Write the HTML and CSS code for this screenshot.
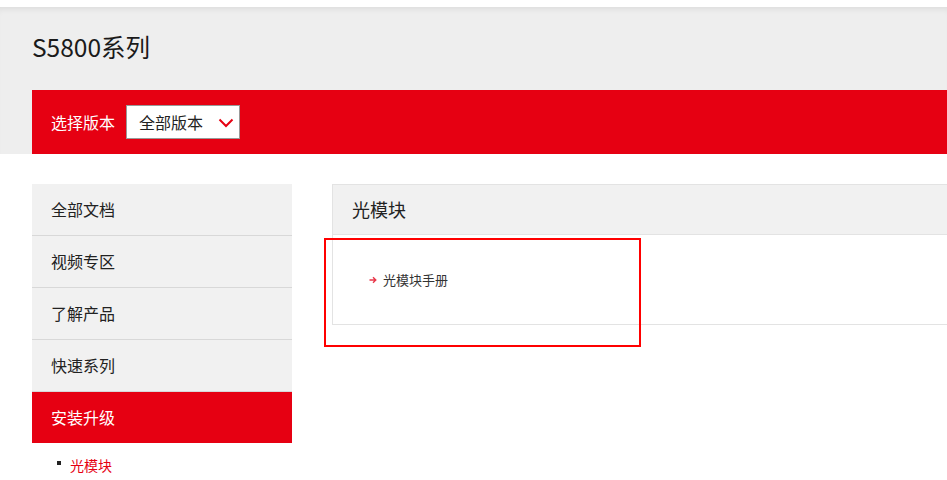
FILE: index.html
```html
<!DOCTYPE html>
<html lang="zh-CN">
<head>
<meta charset="utf-8">
<title>S5800系列</title>
<link rel="stylesheet" href="styles.css">
</head>
<body>
<div class="top-gap"></div>
<header class="hero">
  <h1 class="title">S5800系列</h1>
  <div class="version-bar">
    <span class="version-label">选择版本</span>
    <div class="select">
      <span class="select-text">全部版本</span>
      <svg class="chev" width="16" height="10" viewBox="0 0 16 10"><path d="M1.5 1.5 L8 8 L14.5 1.5" fill="none" stroke="#e60012" stroke-width="2"/></svg>
    </div>
  </div>
</header>
<main class="content">
  <aside class="sidebar">
    <ul class="nav">
      <li class="nav-item">全部文档</li>
      <li class="nav-item">视频专区</li>
      <li class="nav-item">了解产品</li>
      <li class="nav-item">快速系列</li>
      <li class="nav-item active">安装升级</li>
    </ul>
    <ul class="subnav">
      <li class="sub-item"><span class="dot"></span>光模块</li>
    </ul>
  </aside>
  <section class="panel">
    <div class="panel-head">光模块</div>
    <div class="panel-body">
      <a class="doc-link"><svg class="arrow" width="8" height="8" viewBox="0 0 8 8"><path d="M0.5 4 H6.5 M4 1.2 L6.8 4 L4 6.8" fill="none" stroke="#e8374a" stroke-width="1.4"/></svg>光模块手册</a>
    </div>
    <div class="highlight"></div>
  </section>
</main>
</body>
</html>
```
FILE: styles.css
```css
* { box-sizing: border-box; }
html, body { margin: 0; padding: 0; }
body {
  font-family: "Noto Sans CJK SC", "Noto Sans", sans-serif;
  background: #fff;
  color: #222;
  width: 947px;
  overflow: hidden;
}
.top-gap { height: 7px; background: #fff; }
.hero {
  background: #eeeeee;
  box-shadow: inset 0 6px 6px -4px rgba(0,0,0,0.08);
  padding: 24px 0 0 32px;
  height: 147px;
}
.title {
  margin: 0;
  font-size: 24.5px;
  font-weight: 400;
  line-height: 32px;
  color: #1a1a1a;
  height: 59px;
}
.version-bar {
  background: #e60012;
  height: 64px;
  display: flex;
  align-items: center;
  padding-left: 19px;
}
.version-label {
  color: #fff;
  font-size: 16px;
  line-height: 20px;
  margin-right: 11px;
}
.select {
  width: 114px;
  height: 34px;
  background: #fff;
  border: 1px solid #999;
  display: flex;
  align-items: center;
  justify-content: space-between;
  padding: 0 5px 0 12px;
}
.select-text { font-size: 16px; color: #222; line-height: 20px; }
.chev { display: block; margin-top: 1px; }
.content {
  display: flex;
  padding: 30px 0 0 32px;
  gap: 40px;
}
.sidebar { width: 260px; flex: none; }
.nav { list-style: none; margin: 0; padding: 0; }
.nav-item {
  height: 52px;
  background: #f1f1f1;
  border-bottom: 1px solid #d8d8d8;
  font-size: 16px;
  line-height: 51px;
  padding-left: 19px;
  color: #222;
}
.nav-item.active {
  background: #e60012;
  color: #fff;
  border-bottom: none;
  height: 51px;
}
.subnav { list-style: none; margin: 0; padding: 12px 0 0 25px; }
.sub-item {
  font-size: 14px;
  line-height: 20px;
  color: #e60012;
  display: flex;
  align-items: center;
}
.dot {
  width: 4px;
  height: 4px;
  background: #222;
  margin-right: 9px;
  margin-top: -4px;
}
.panel {
  flex: 1;
  position: relative;
}
.panel-head {
  height: 51px;
  background: #f1f1f1;
  border: 1px solid #e3e3e3;
  border-right: none;
  font-size: 18px;
  line-height: 49px;
  padding-left: 19px;
  color: #222;
}
.panel-body {
  height: 90px;
  border-left: 1px solid #e3e3e3;
  border-bottom: 1px solid #e3e3e3;
  padding: 35px 0 0 36px;
}
.doc-link {
  font-size: 13px;
  line-height: 20px;
  color: #333;
  display: flex;
  align-items: center;
}
.arrow { margin-right: 6px; }
.highlight {
  position: absolute;
  left: -8px;
  top: 54px;
  width: 317px;
  height: 109px;
  border: 2px solid #ff0000;
}
```
